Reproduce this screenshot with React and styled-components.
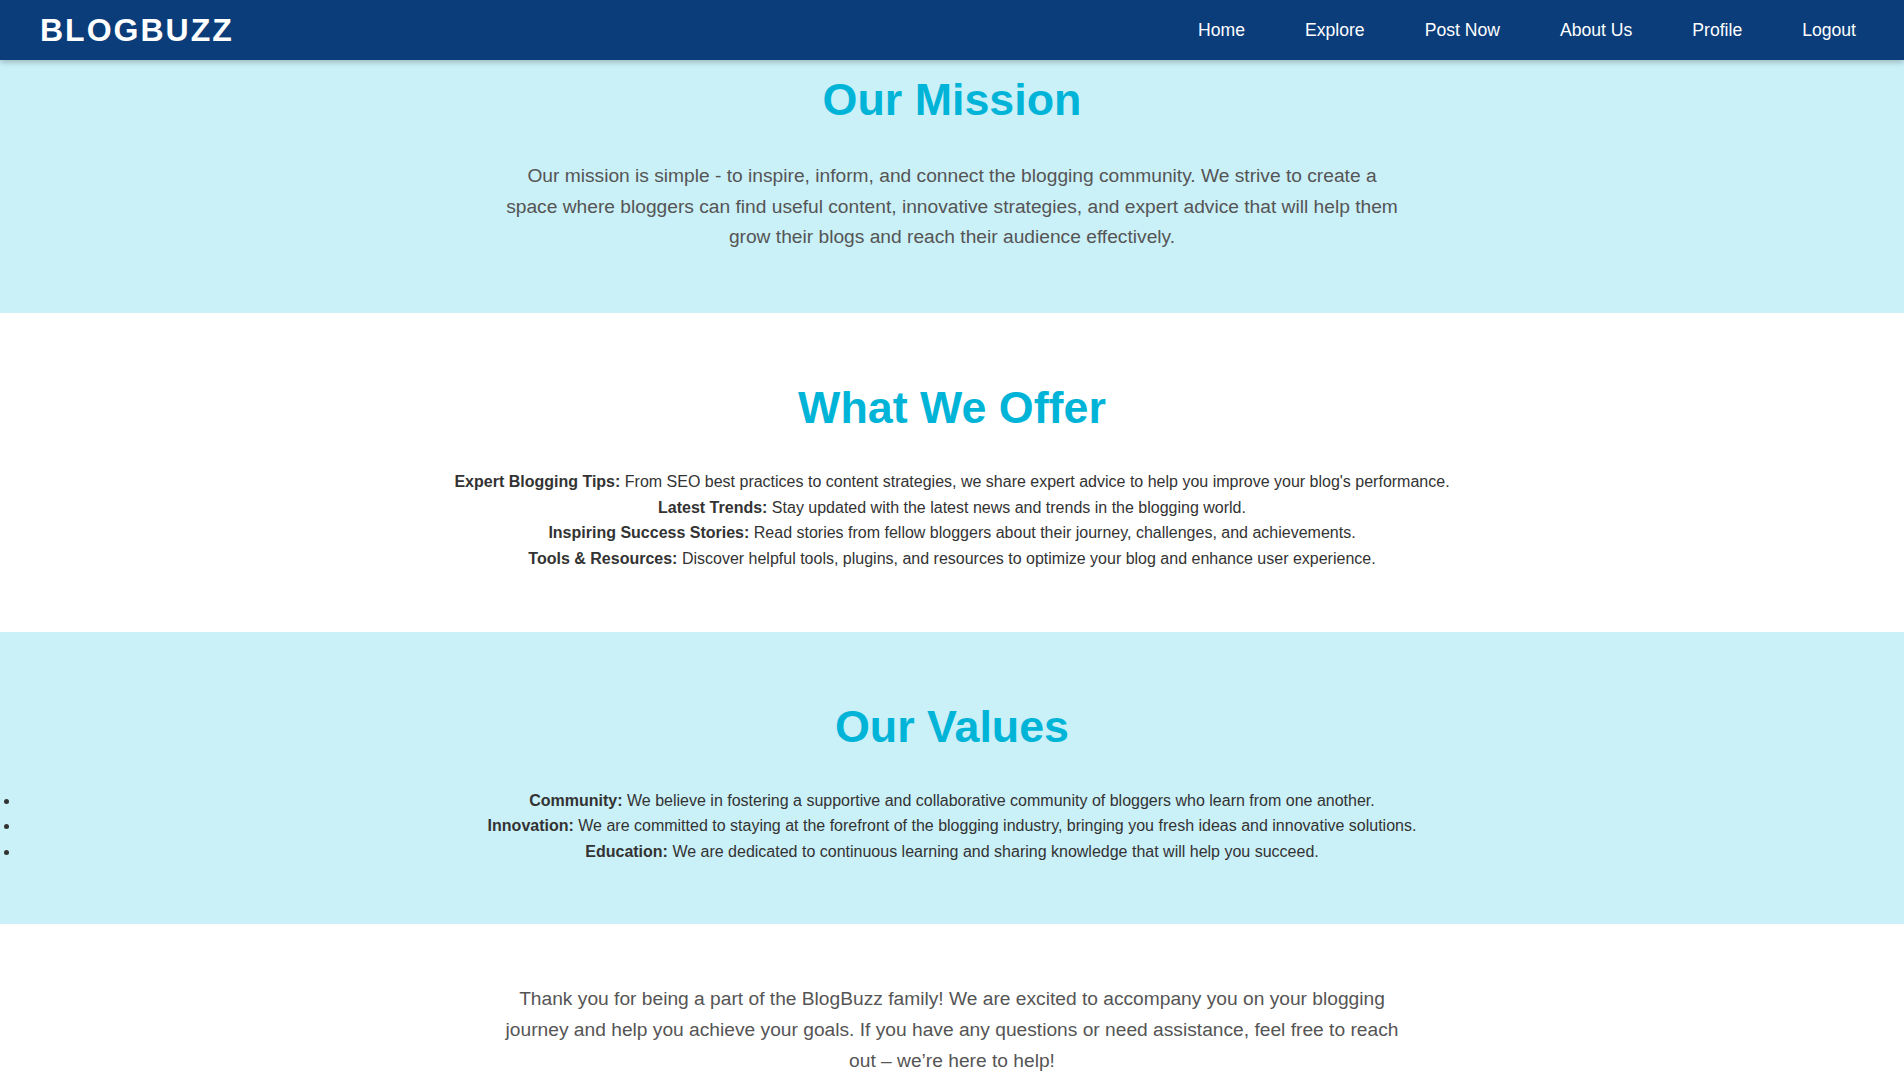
import React from 'react';
import styled, { createGlobalStyle } from 'styled-components';

const GlobalStyle = createGlobalStyle`
    body {
        margin: 0;
        font-family: 'Liberation Sans', Arial, sans-serif;
        background: #fff;
    }
`

const Header = styled.header`
    height: 60px;
    background-color: #0a3d7a;
    display: flex;
    align-items: center;
    justify-content: space-between;
    padding: 0 48px 0 40px;
    box-shadow: 0 2px 6px rgba(0, 0, 0, 0.25);
    position: relative;
    z-index: 2;
`

const Logo = styled.div`
    color: #fff;
    font-size: 32px;
    font-weight: bold;
    letter-spacing: 2px;
`

const Nav = styled.nav`
    display: flex;
    gap: 60px;
`

const NavLink = styled.a`
    color: #fff;
    font-size: 1.1rem;
    text-decoration: none;
    cursor: pointer;
`

const Section = styled.section`
    background-color: ${props => (props.$tinted ? '#caf0f8' : '#fff')};
    padding: ${props => (props.$top ? props.$top : '60px')} 20px 60px;
    text-align: center;
`

const Title = styled.h2`
    color: #00b4d8;
    font-size: 2.8rem;
    font-weight: bold;
    margin: 9px 0 36px;
`

const Para = styled.p`
    max-width: 900px;
    margin: 0 auto;
    font-size: 1.2rem;
    line-height: 1.6;
    color: #555;
`

const List = styled.ul`
    margin: 0;
    padding: 0;
    list-style: ${props => (props.$bullets ? 'disc' : 'none')};
`

const Item = styled.li`
    font-size: 16px;
    line-height: 1.6;
    color: #333;
`

const offers = [
    ['Expert Blogging Tips:', "From SEO best practices to content strategies, we share expert advice to help you improve your blog's performance."],
    ['Latest Trends:', 'Stay updated with the latest news and trends in the blogging world.'],
    ['Inspiring Success Stories:', 'Read stories from fellow bloggers about their journey, challenges, and achievements.'],
    ['Tools & Resources:', 'Discover helpful tools, plugins, and resources to optimize your blog and enhance user experience.'],
]

const values = [
    ['Community:', 'We believe in fostering a supportive and collaborative community of bloggers who learn from one another.'],
    ['Innovation:', 'We are committed to staying at the forefront of the blogging industry, bringing you fresh ideas and innovative solutions.'],
    ['Education:', 'We are dedicated to continuous learning and sharing knowledge that will help you succeed.'],
]

const links = ['Home', 'Explore', 'Post Now', 'About Us', 'Profile', 'Logout']

const App = () => {
    return (
        <>
            <GlobalStyle />
            <Header>
                <Logo>BLOGBUZZ</Logo>
                <Nav>
                    {links.map(l => <NavLink key={l}>{l}</NavLink>)}
                </Nav>
            </Header>

            <Section $tinted $top='5px'>
                <Title>Our Mission</Title>
                <Para>
                    Our mission is simple - to inspire, inform, and connect the blogging community. We strive to create a space where bloggers can find useful content, innovative strategies, and expert advice that will help them grow their blogs and reach their audience effectively.
                </Para>
            </Section>

            <Section>
                <Title>What We Offer</Title>
                <List>
                    {offers.map(([b, t]) => (
                        <Item key={b}><strong>{b}</strong> {t}</Item>
                    ))}
                </List>
            </Section>

            <Section $tinted>
                <Title>Our Values</Title>
                <List $bullets>
                    {values.map(([b, t]) => (
                        <Item key={b}><strong>{b}</strong> {t}</Item>
                    ))}
                </List>
            </Section>

            <Section>
                <Para>
                    Thank you for being a part of the BlogBuzz family! We are excited to accompany you on your blogging journey and help you achieve your goals. If you have any questions or need assistance, feel free to reach out – we’re here to help!
                </Para>
            </Section>
        </>
    );
};

export default App;
